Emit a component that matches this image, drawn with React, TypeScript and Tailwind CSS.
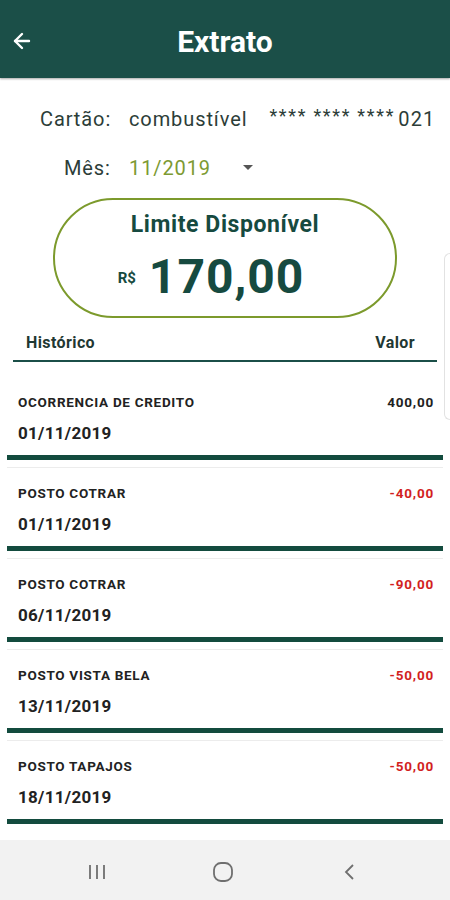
import React from 'react';
import { ArrowLeft } from 'lucide-react';

type Lancamento = { historico: string; data: string; valor: string };

const lancamentos: Lancamento[] = [
    { historico: 'OCORRENCIA DE CREDITO', data: '01/11/2019', valor: '400,00' },
    { historico: 'POSTO COTRAR', data: '01/11/2019', valor: '-40,00' },
    { historico: 'POSTO COTRAR', data: '06/11/2019', valor: '-90,00' },
    { historico: 'POSTO VISTA BELA', data: '13/11/2019', valor: '-50,00' },
    { historico: 'POSTO TAPAJOS', data: '18/11/2019', valor: '-50,00' },
];

function LancamentoRow({ item, first }: { item: Lancamento; first: boolean }) {
    const negativo = item.valor.startsWith('-');
    return (
        <div className="pt-[7px]">
            <div className={first ? 'mx-[7px] border-t border-transparent border-b-[5px] border-b-[#134b3e] pt-[17px] pb-[12px] pl-[11px] pr-[9px]' : 'mx-[7px] border-t border-[#ececec] border-b-[5px] border-b-[#134b3e] pt-[17px] pb-[12px] pl-[11px] pr-[9px]'}>
                <div className="flex items-center justify-between h-4">
                    <span className="text-[13.5px] font-bold tracking-[0.7px] text-[#222]">{item.historico}</span>
                    <span className={negativo ? 'text-[13.5px] font-bold tracking-[0.8px] text-[#d21f1f]' : 'text-[13.5px] font-bold tracking-[0.8px] text-[#222]'}>{item.valor}</span>
                </div>
                <div className="mt-[13px] h-5 leading-5 text-[17px] font-bold tracking-[0.3px] text-[#222]">{item.data}</div>
            </div>
        </div>
    );
}

export default function App() {
    return (
        <div className="relative w-[450px] h-[900px] bg-white flex flex-col overflow-hidden" style={{ fontFamily: 'Roboto, "Noto Sans", sans-serif' }}>
            <header className="relative h-[78px] bg-[#1b4f48] flex items-center justify-center pt-[5px] shadow-[0_1px_2px_rgba(0,0,0,0.35)] shrink-0">
                <ArrowLeft className="absolute left-[10px] top-[29px] text-white" size={24} strokeWidth={2.4} />
                <h1 className="text-white text-[30px] font-bold leading-[36px]">Extrato</h1>
            </header>

            <div className="flex items-center pt-[27px] h-[54px] text-[20px] tracking-[0.9px] text-[#2c3d38]">
                <span className="ml-[40px] w-[89px]">Cartão:</span>
                <span>combustível</span>
                <span className="ml-[22px] text-[18px] tracking-[1.7px] -translate-y-[3px]">**** **** ****</span>
                <span className="ml-[3px] tracking-[1.2px]">021</span>
            </div>

            <div className="flex items-center h-[49px] pt-[22px] text-[20px] tracking-[0.9px]">
                <span className="ml-[64px] w-[65px] text-[#2c3d38]">Mês:</span>
                <span className="text-[#7d9a32]">11/2019</span>
                <span className="ml-[32px] w-0 h-0 border-x-[5px] border-x-transparent border-t-[5px] border-t-[#555]" />
            </div>

            <div className="mt-[17px] mx-[53px] h-[120px] rounded-full border-2 border-[#7c9a2c] flex flex-col items-center text-[#164a40]">
                <div className="mt-[11px] text-[23px] font-bold tracking-[0.6px] leading-[28px]">Limite Disponível</div>
                <div className="mt-[10px] mr-[28px] flex items-center">
                    <span className="text-[15px] font-bold mr-[13px] mt-[2px]">R$</span>
                    <span className="text-[48px] font-bold tracking-[1px] leading-[56px]">170,00</span>
                </div>
            </div>

            <div className="mt-[2px] mx-[13px] border-b-2 border-[#1b4f48] h-[42px] flex items-center justify-between px-[13px] pt-[6px] text-[16px] font-bold tracking-[0.4px] text-[#1f3833]">
                <span>Histórico</span>
                <span className="mr-[9px]">Valor</span>
            </div>

            <div className="pt-[7px]">
                {lancamentos.map((item, i) => (
                    <LancamentoRow key={i} item={item} first={i === 0} />
                ))}
            </div>

            <div className="absolute right-0 top-[253px] w-[6px] h-[167px] rounded-l-md border border-r-0 border-[#e2e2e2]" />

            <nav className="mt-auto h-[60px] bg-[#f2f2f2] flex items-center pl-[34px] pt-[4px]">
                <div className="w-[126px] flex justify-center">
                    <svg width="20" height="16" viewBox="0 0 20 16" className="text-[#6f6f6f]">
                        <path d="M3 1v14M10 1v14M17 1v14" stroke="currentColor" strokeWidth="1.8" fill="none" />
                    </svg>
                </div>
                <div className="w-[126px] flex justify-center">
                    <svg width="22" height="22" viewBox="0 0 22 22" className="text-[#6f6f6f]">
                        <rect x="2" y="2" width="18" height="18" rx="7" stroke="currentColor" strokeWidth="1.8" fill="none" />
                    </svg>
                </div>
                <div className="w-[126px] flex justify-center">
                    <svg width="14" height="18" viewBox="0 0 14 18" className="text-[#6f6f6f]">
                        <path d="M11 2L4 9l7 7" stroke="currentColor" strokeWidth="1.8" fill="none" />
                    </svg>
                </div>
            </nav>
        </div>
    );
}
